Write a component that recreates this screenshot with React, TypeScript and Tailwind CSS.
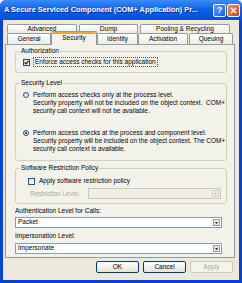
import type { ReactNode } from 'react';

type TabProps = { label: string; className?: string; active?: boolean };

function Tab({ label, className = '', active = false }: TabProps) {
  if (active) {
    return (
      <div className={`relative z-10 -mt-[2px] -mb-px flex h-[14px] flex-col rounded-t-[2px] border border-b-0 border-[#919b9c] bg-[#f3f2ea] ${className}`}>
        <div className="h-[2px] rounded-t-[2px] bg-[#f1a23c]" />
        <div className="flex flex-1 items-center justify-center pb-[2px] text-[6.5px] leading-none">{label}</div>
      </div>
    );
  }
  return (
    <div className={`flex h-full items-center justify-center rounded-t-[2px] border border-b-0 border-[#919b9c] bg-gradient-to-b from-white to-[#ecebe4] text-[6.5px] leading-none ${className}`}>
      {label}
    </div>
  );
}

function GroupBox({ title, className = '', children }: { title: string; className?: string; children: ReactNode }) {
  return (
    <fieldset className={`rounded-[3px] border border-[#d0d0bf] pl-[4px] ${className}`}>
      <legend className="px-[1px] text-[6.5px] leading-[8px] text-black">{title}</legend>
      {children}
    </fieldset>
  );
}

function CheckBox({ checked = false }: { checked?: boolean }) {
  return (
    <span className="flex h-[7px] w-[7px] shrink-0 items-center justify-center border border-[#1c5180] bg-gradient-to-br from-[#dcdcd6] to-white">
      {checked && (
        <svg width="5" height="5" viewBox="0 0 5 5">
          <path d="M0.5 2.3 L1.9 3.8 L4.5 0.8" fill="none" stroke="#1f1f1f" strokeWidth="1.2" />
        </svg>
      )}
    </span>
  );
}

function Radio({ checked = false }: { checked?: boolean }) {
  return (
    <span className="mt-[1px] flex h-[6px] w-[6px] shrink-0 items-center justify-center rounded-full border border-[#1c5180] bg-gradient-to-br from-[#dcdcd6] to-white">
      {checked && <span className="h-[2px] w-[2px] rounded-full bg-[#1f1f1f]" />}
    </span>
  );
}

function Select({ value = '', disabled = false, className = '' }: { value?: string; disabled?: boolean; className?: string }) {
  return (
    <div className={`flex h-[11px] items-center border ${disabled ? 'border-[#c9c7ba] bg-[#f1efe4]' : 'border-[#7f9db9] bg-white'} ${className}`}>
      <span className="flex-1 pl-[2px] text-[6.5px] leading-none">{value}</span>
      <span className={`m-px flex h-[7px] w-[7px] items-center justify-center border ${disabled ? 'border-[#d4d2c8] bg-[#efede4]' : 'border-[#a0a09a] bg-[#e6e4dc]'}`}>
        <svg width="3" height="2" viewBox="0 0 3 2">
          <path d="M0 0 L3 0 L1.5 2 Z" fill={disabled ? '#c0beb4' : '#1f1f1f'} />
        </svg>
      </span>
    </div>
  );
}

function Button({ label, disabled = false }: { label: string; disabled?: boolean }) {
  return (
    <div
      className={`flex h-[12px] w-[43px] items-center justify-center rounded-[2px] border text-[6.5px] leading-none ${
        disabled
          ? 'border-[#c9c7ba] bg-[#f5f4ea] text-[#aca899]'
          : 'border-[#003c74] bg-gradient-to-b from-white to-[#e3e2da] text-black'
      }`}
    >
      {label}
    </div>
  );
}

export default function App() {
  return (
    <div className="flex h-[283px] w-[242px] flex-col overflow-hidden rounded-t-[6px] bg-[#0842d0] font-['Liberation_Sans',Arial,sans-serif] text-black">
      {/* Title bar */}
      <div className="flex h-[20px] shrink-0 items-center bg-gradient-to-b from-[#3a8cf8] via-[#0a5ce8] to-[#0650da] pl-[4px] pr-[2px]">
        <span className="flex-1 whitespace-nowrap text-[7.4px] font-bold text-white [text-shadow:1px_1px_0_#0a2a8a]">
          A Secure Serviced Component (COM+ Application) Pr...
        </span>
        <div className="flex gap-[1px]">
          <span className="flex h-[13px] w-[13px] items-center justify-center rounded-[2px] border border-white bg-gradient-to-br from-[#5d9af8] to-[#1c5be4] text-[9px] font-bold leading-none text-white">
            ?
          </span>
          <span className="flex h-[13px] w-[13px] items-center justify-center rounded-[2px] border border-white bg-gradient-to-br from-[#ed8c66] to-[#d43f12]">
            <svg width="7" height="7" viewBox="0 0 7 7">
              <path d="M1 1 L6 6 M6 1 L1 6" stroke="white" strokeWidth="1.6" />
            </svg>
          </span>
        </div>
      </div>

      {/* Dialog body */}
      <div className="mx-[3px] mb-[3px] flex flex-1 flex-col bg-[#ece9d8] pl-[2px] pr-[4px] pt-[4px]">
        {/* Back row of tabs */}
        <div className="flex h-[9px] gap-[2px] pl-[2px]">
          <Tab label="Advanced" className="w-[70px]" />
          <Tab label="Dump" className="w-[59px]" />
          <Tab label="Pooling & Recycling" className="w-[90px]" />
        </div>
        {/* Front row of tabs */}
        <div className="flex h-[11px] items-end pl-[2px]">
          <Tab label="General" className="w-[44px]" />
          <Tab label="Security" active className="w-[46px]" />
          <Tab label="Identity" className="w-[41px]" />
          <Tab label="Activation" className="w-[50px]" />
          <Tab label="Queuing" className="ml-px w-[44px]" />
        </div>

        {/* Tab page */}
        <div className="flex h-[214px] flex-col border border-[#919b9c] bg-[#f3f2ea] pl-[9px] pr-[7px]">
          <GroupBox title="Authorization" className="mt-[2px] pb-[6px]">
            <div className="mt-[3px] ml-[3px] flex items-center gap-[4px]">
              <CheckBox checked />
              <span className="whitespace-nowrap px-px text-[6.5px] leading-[8px] outline-1 outline-dotted outline-[#555]">
                Enforce access checks for this application
              </span>
            </div>
          </GroupBox>

          <GroupBox title="Security Level" className="mt-[6px] pb-[7px]">
            <div className="mt-[4px] ml-[3px] flex items-start gap-[4px]">
              <Radio />
              <p className="whitespace-nowrap text-[6.5px] leading-[8px]">
                Perform access checks only at the process level.
                <br />
                Security property will not be included on the object context.&nbsp; COM+
                <br />
                security call context will not be available.
              </p>
            </div>
            <div className="mt-[14px] ml-[3px] flex items-start gap-[4px]">
              <Radio checked />
              <p className="whitespace-nowrap text-[6.5px] leading-[8px]">
                Perform access checks at the process and component level.
                <br />
                Security property will be included on the object context. The COM+
                <br />
                security call context is available.
              </p>
            </div>
          </GroupBox>

          <GroupBox title="Software Restriction Policy" className="mt-[3px] pb-[4px]">
            <div className="mt-[5px] ml-[8px] flex items-center gap-[4px]">
              <CheckBox />
              <span className="whitespace-nowrap text-[6.5px] leading-[8px]">Apply software restriction policy</span>
            </div>
            <div className="mt-[3px] ml-[10px] flex items-center gap-[8px] pr-[5px]">
              <span className="whitespace-nowrap text-[6.5px] leading-[8px] text-[#aca899]">Restriction Level:</span>
              <Select disabled className="flex-1" />
            </div>
          </GroupBox>

          <div className="mt-[3px] pr-[5px]">
            <div className="text-[6.5px] leading-[8px]">Authentication Level for Calls:</div>
            <Select value="Packet" className="mt-[2px]" />
            <div className="mt-[4px] text-[6.5px] leading-[8px]">Impersonation Level:</div>
            <Select value="Impersonate" className="mt-[3px]" />
          </div>
        </div>

        {/* Buttons */}
        <div className="mt-[3px] flex justify-end gap-[4px] pr-[2px]">
          <Button label="OK" />
          <Button label="Cancel" />
          <Button label="Apply" disabled />
        </div>
      </div>
    </div>
  );
}
